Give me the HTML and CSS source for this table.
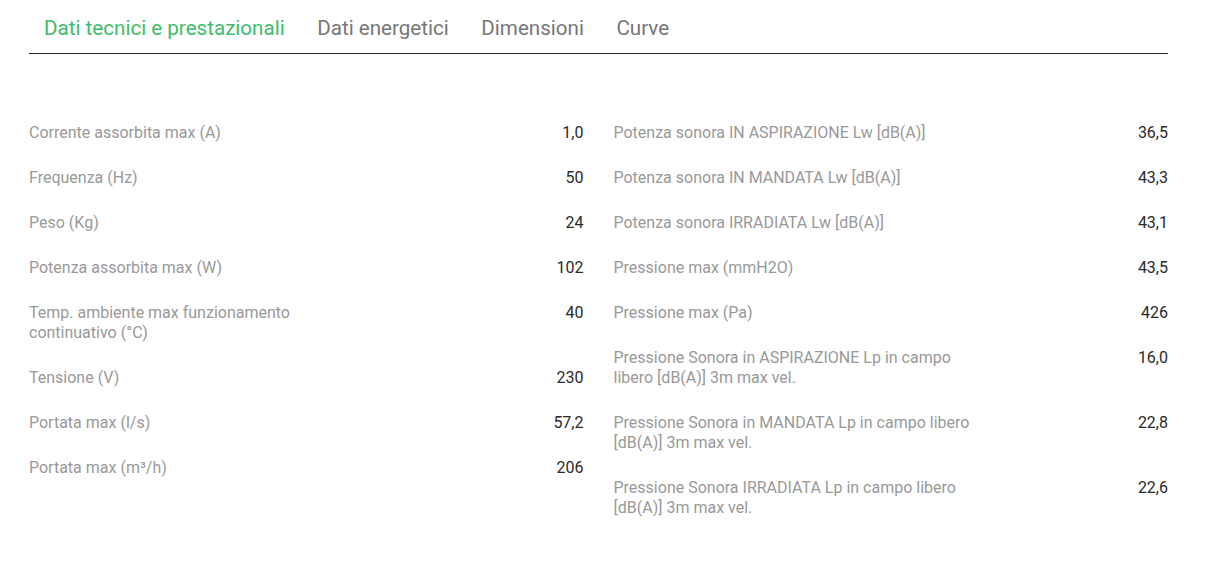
FILE: index.html
```html
<!DOCTYPE html>
<html lang="it">
<head>
<meta charset="utf-8">
<title>Dati tecnici</title>
<link rel="stylesheet" href="styles.css">
</head>
<body>
<div class="page">
  <nav class="tabs">
    <a class="tab active">Dati tecnici e prestazionali</a>
    <a class="tab">Dati energetici</a>
    <a class="tab">Dimensioni</a>
    <a class="tab">Curve</a>
  </nav>
  <div class="specs">
    <div class="col col-narrow">
      <div class="row"><span class="label">Corrente assorbita max (A)</span><span class="value">1,0</span></div>
      <div class="row"><span class="label">Frequenza (Hz)</span><span class="value">50</span></div>
      <div class="row"><span class="label">Peso (Kg)</span><span class="value">24</span></div>
      <div class="row"><span class="label">Potenza assorbita max (W)</span><span class="value">102</span></div>
      <div class="row"><span class="label">Temp. ambiente max funzionamento continuativo (°C)</span><span class="value">40</span></div>
      <div class="row"><span class="label">Tensione (V)</span><span class="value">230</span></div>
      <div class="row"><span class="label">Portata max (l/s)</span><span class="value">57,2</span></div>
      <div class="row"><span class="label">Portata max (m³/h)</span><span class="value">206</span></div>
    </div>
    <div class="col">
      <div class="row"><span class="label">Potenza sonora IN ASPIRAZIONE Lw [dB(A)]</span><span class="value">36,5</span></div>
      <div class="row"><span class="label">Potenza sonora IN MANDATA Lw [dB(A)]</span><span class="value">43,3</span></div>
      <div class="row"><span class="label">Potenza sonora IRRADIATA Lw [dB(A)]</span><span class="value">43,1</span></div>
      <div class="row"><span class="label">Pressione max (mmH2O)</span><span class="value">43,5</span></div>
      <div class="row"><span class="label">Pressione max (Pa)</span><span class="value">426</span></div>
      <div class="row"><span class="label">Pressione Sonora in ASPIRAZIONE Lp in campo libero [dB(A)] 3m max vel.</span><span class="value">16,0</span></div>
      <div class="row"><span class="label">Pressione Sonora in MANDATA Lp in campo libero [dB(A)] 3m max vel.</span><span class="value">22,8</span></div>
      <div class="row"><span class="label">Pressione Sonora IRRADIATA Lp in campo libero [dB(A)] 3m max vel.</span><span class="value">22,6</span></div>
    </div>
  </div>
</div>
</body>
</html>
```

FILE: styles.css
```css
* { box-sizing: border-box; }
html, body { margin: 0; padding: 0; background: #fff; }
body {
  font-family: Roboto, "Open Sans", "Liberation Sans", sans-serif;
  color: #999;
}
.page {
  width: 1139px;
  margin-left: 29px;
}
.tabs {
  display: flex;
  border-bottom: 1px solid #222;
  height: 54px;
  padding-top: 16px;
}
.tab {
  font-size: 20.6px;
  line-height: 24px;
  padding: 0 17.5px 0 15px;
  color: #777;
  cursor: pointer;
}
.tab.active { color: #3dbd6b; }
.specs {
  display: grid;
  grid-template-columns: 1fr 1fr;
  column-gap: 30px;
  padding-top: 69px;
}
.row {
  display: flex;
  justify-content: space-between;
  align-items: flex-start;
  font-size: 16px;
  line-height: 20px;
  padding-bottom: 25px;
}
.label {
  width: 360px;
  color: #999;
}
.col-narrow .label { width: 320px; }
.value {
  color: #2a2a2a;
  text-align: right;
}
```
